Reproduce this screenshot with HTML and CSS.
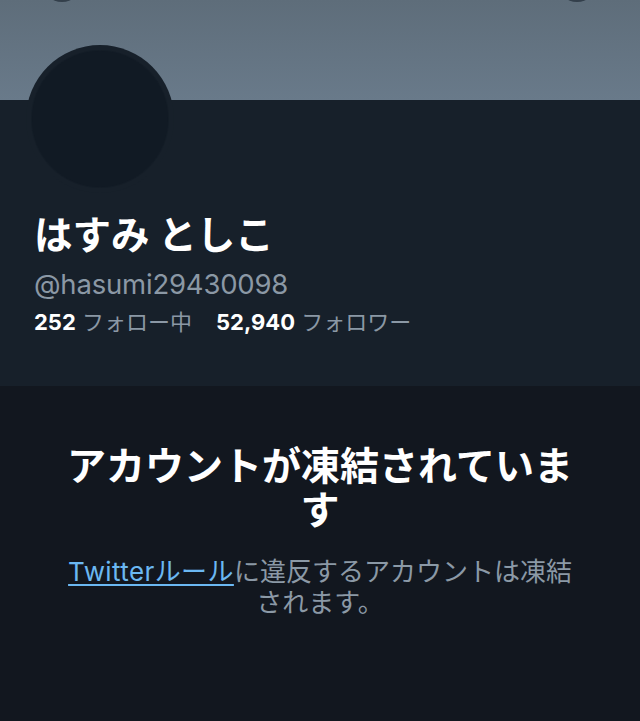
FILE: index.html
```html
<!DOCTYPE html>
<html lang="ja">
<head>
<meta charset="utf-8">
<link rel="stylesheet" href="styles.css">
</head>
<body>
<div class="page">
  <header class="banner">
    <span class="navbtn navbtn-left"></span>
    <span class="navbtn navbtn-right"></span>
  </header>
  <section class="profile">
    <div class="avatar"><div class="avatar-inner"></div></div>
    <h1 class="name">はすみ としこ</h1>
    <div class="handle">@hasumi29430098</div>
    <div class="stats">
      <span class="stat"><b>252</b> フォロー中</span>
      <span class="stat"><b>52,940</b> フォロワー</span>
    </div>
  </section>
  <section class="suspended">
    <h2 class="title">アカウントが凍結されています</h2>
    <p class="desc"><a class="link" href="#">Twitterルール</a>に違反するアカウントは凍結されます。</p>
  </section>
</div>
</body>
</html>
```
FILE: styles.css
```css
* { box-sizing: border-box; }
html, body { margin: 0; padding: 0; }
body {
  background: #12171f;
  font-family: Inter, "Noto Sans CJK JP", sans-serif;
  width: 640px;
  height: 721px;
  overflow: hidden;
}
.page { display: flex; flex-direction: column; min-height: 721px; }
.banner {
  position: relative;
  height: 100px;
  background: linear-gradient(#5e6d7a, #697a8a);
  overflow: hidden;
}
.navbtn {
  position: absolute;
  top: -38px;
  width: 40px;
  height: 40px;
  border-radius: 50%;
  background: #333f4b;
}
.navbtn-left { left: 42px; }
.navbtn-right { left: 557px; }
.profile {
  background: #17202a;
  padding: 0 34px 0 34px;
  height: 286px;
  display: flex;
  flex-direction: column;
}
.avatar {
  position: relative;
  z-index: 1;
  width: 148px;
  height: 148px;
  margin-top: -55px;
  margin-left: -8px;
  border-radius: 50%;
  background: #17202a;
  padding: 6px;
}
.avatar-inner {
  width: 100%;
  height: 100%;
  border-radius: 50%;
  background: #111a24;
  box-shadow: 0 0 0 1px #141d27;
}
.name {
  margin: 17px 0 0 0;
  font-family: "Noto Sans CJK JP", sans-serif;
  font-weight: 700;
  font-size: 38.5px;
  line-height: 44px;
  color: #ffffff;
}
.handle {
  margin-top: 13px;
  font-size: 27.5px;
  line-height: 34px;
  color: #8b98a5;
  letter-spacing: -0.2px;
}
.stats {
  margin-top: 6px;
  display: flex;
  gap: 24px;
  font-size: 22px;
  line-height: 30px;
  color: #8b98a5;
}
.stat b { color: #ffffff; font-weight: 700; }
.suspended {
  flex: 1;
  padding: 55px 63px 0;
  text-align: center;
}
.title {
  margin: 0;
  font-family: "Noto Sans CJK JP", sans-serif;
  font-weight: 700;
  font-size: 39px;
  line-height: 44px;
  color: #ffffff;
}
.desc {
  margin: 27px 0 0;
  font-size: 26px;
  line-height: 31px;
  color: #8b99a6;
}
.link {
  color: #6bb8f2;
  text-decoration: underline;
  text-underline-offset: 3px;
  letter-spacing: 0.4px;
}
```
